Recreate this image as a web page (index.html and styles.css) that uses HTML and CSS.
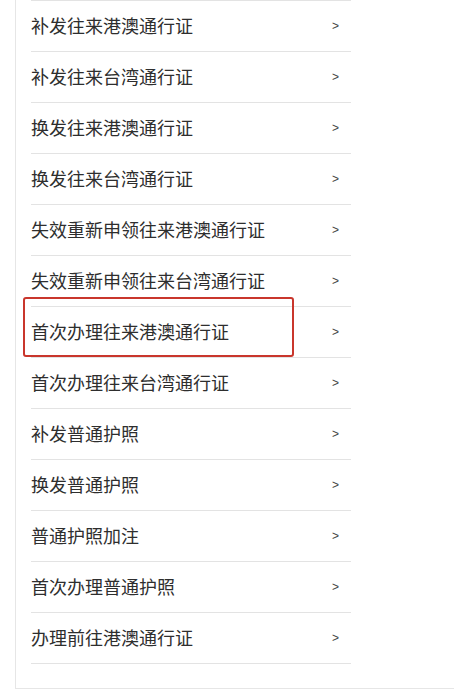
FILE: index.html
```html
<!DOCTYPE html>
<html lang="zh">
<head>
<meta charset="utf-8">
<link rel="stylesheet" href="styles.css">
</head>
<body>
<div class="panel">
  <ul class="list">
    <li class="row"><span class="label">补发往来港澳通行证</span><span class="arrow">&gt;</span></li>
    <li class="row"><span class="label">补发往来台湾通行证</span><span class="arrow">&gt;</span></li>
    <li class="row"><span class="label">换发往来港澳通行证</span><span class="arrow">&gt;</span></li>
    <li class="row"><span class="label">换发往来台湾通行证</span><span class="arrow">&gt;</span></li>
    <li class="row"><span class="label">失效重新申领往来港澳通行证</span><span class="arrow">&gt;</span></li>
    <li class="row"><span class="label">失效重新申领往来台湾通行证</span><span class="arrow">&gt;</span></li>
    <li class="row highlighted"><span class="label">首次办理往来港澳通行证</span><span class="arrow">&gt;</span><span class="mark"></span></li>
    <li class="row"><span class="label">首次办理往来台湾通行证</span><span class="arrow">&gt;</span></li>
    <li class="row"><span class="label">补发普通护照</span><span class="arrow">&gt;</span></li>
    <li class="row"><span class="label">换发普通护照</span><span class="arrow">&gt;</span></li>
    <li class="row"><span class="label">普通护照加注</span><span class="arrow">&gt;</span></li>
    <li class="row"><span class="label">首次办理普通护照</span><span class="arrow">&gt;</span></li>
    <li class="row last"><span class="label">办理前往港澳通行证</span><span class="arrow">&gt;</span></li>
  </ul>
</div>
</body>
</html>
```
FILE: styles.css
```css
html, body {
  margin: 0;
  padding: 0;
  background: #ffffff;
}
body {
  font-family: "Noto Sans CJK SC", "Noto Sans", sans-serif;
  color: #333333;
}
.panel {
  margin-left: 15px;
  width: 439px;
  height: 688px;
  border-left: 1px solid #e6e6e6;
  border-bottom: 1px solid #e6e6e6;
  box-sizing: content-box;
}
.list {
  list-style: none;
  margin: 0;
  padding: 0 0 0 15px;
  width: 320px;
}
.row {
  position: relative;
  display: flex;
  align-items: center;
  justify-content: space-between;
  height: 47px;
  padding-bottom: 3px;
  border-top: 1px solid #e3e3e3;
  padding-right: 12px;
}
.row.last {
  border-bottom: 1px solid #e3e3e3;
}
.label {
  font-size: 18px;
  line-height: 1;
  color: #2e2e2e;
}
.arrow {
  font-family: "Liberation Sans", sans-serif;
  font-size: 12px;
  color: #444;
  margin-top: 2px;
}
.mark {
  position: absolute;
  left: -8px;
  top: -10px;
  width: 271px;
  height: 60px;
  border: 2.5px solid #c9362c;
  border-radius: 3px;
  box-sizing: border-box;
}
```
